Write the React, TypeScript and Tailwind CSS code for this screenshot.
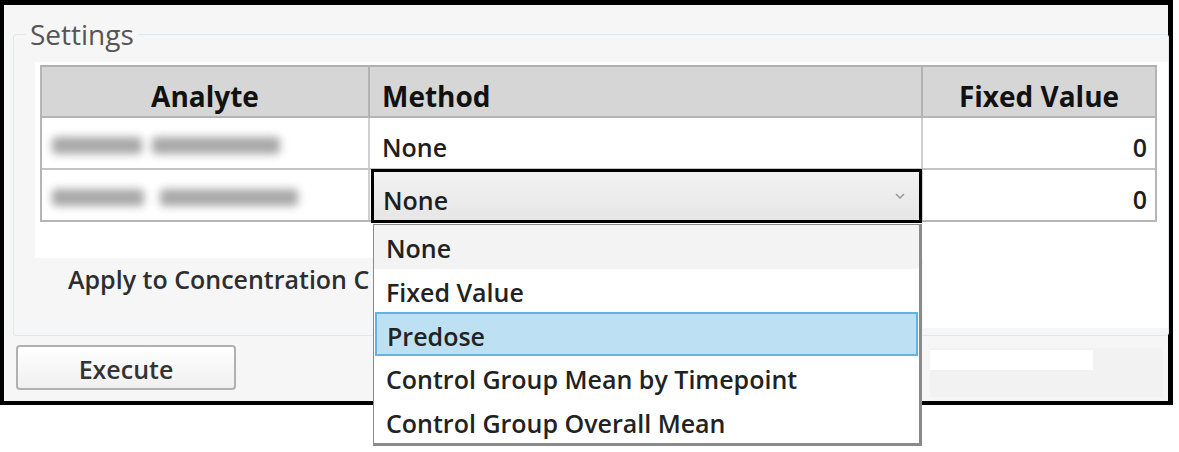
import React from "react";

const font = { fontFamily: '"Open Sans", "Noto Sans", sans-serif' };

function Blur({ a, b, gap }: { a: number; b: number; gap: number }) {
  return (
    <div className="flex items-center blur-[4px] mt-[4px]" style={{ gap }}>
      <div className="h-[17px] bg-[#a8a8a8] rounded" style={{ width: a }} />
      <div className="h-[17px] bg-[#a8a8a8] rounded" style={{ width: b }} />
    </div>
  );
}

export default function App() {
  const items = ["None", "Fixed Value", "Predose", "Control Group Mean by Timepoint", "Control Group Overall Mean"];
  return (
    <div className="relative w-[1179px] h-[452px] bg-white overflow-hidden" style={font}>
      <div className="w-[1173px] h-[405px] border-black border-t-[5px] border-l-[4px] border-r-[5px] border-b-[4px] bg-[#f6f6f6] flex flex-col">
        <fieldset className="ml-[9px] mt-[10px] w-[1153px] h-[321px] border border-[#e1e7ec] rounded-[3px]">
          <legend className="ml-[12px] px-[4px] text-[28px] leading-[38px] text-[#555]">Settings</legend>
          <div className="ml-[21px] mt-[9px] w-[1133px] h-[196px] bg-white pl-[5px] pt-[3px]">
            <div className="w-[1117px] border-2 border-[#b5b5b5] border-t-[#b0b0b0] flex flex-col text-[25px] font-semibold text-[#1e1e1e]">
              <div className="flex h-[51px] bg-[#d6d6d6] border-b-2 border-[#b4b4b4] font-bold text-[28px] text-[#111] leading-none">
                <div className="w-[328px] border-r-2 border-[#b2b2b2] flex items-center justify-center pt-[8px]">Analyte</div>
                <div className="w-[553px] border-r-2 border-[#b2b2b2] flex items-center pl-[12px] pt-[8px]">Method</div>
                <div className="flex-1 flex items-center justify-center pt-[8px]">Fixed Value</div>
              </div>
              <div className="flex h-[52px] border-b-2 border-[#c4c4c4] leading-none">
                <div className="w-[328px] border-r-2 border-[#cfcfcf] flex items-center pl-[10px]"><Blur a={90} b={128} gap={10} /></div>
                <div className="w-[553px] border-r-2 border-[#cfcfcf] flex items-center pl-[12px] pt-[8px]">None</div>
                <div className="flex-1 flex items-center justify-end pr-[8px] pt-[8px]">0</div>
              </div>
              <div className="flex h-[50px] leading-none">
                <div className="w-[328px] border-r-2 border-[#cfcfcf] flex items-center pl-[10px]"><Blur a={92} b={138} gap={16} /></div>
                <div className="w-[553px] border-r-2 border-[#cfcfcf] relative">
                  <div className="absolute left-[1px] right-[-1px] top-[-1px] bottom-[-3px] border-[3px] border-black bg-gradient-to-b from-[#f2f2f2] to-[#e6e6e6] flex items-center pl-[9px] pr-[14px] justify-between">
                    <span className="pt-[8px]">None</span>
                    <svg width="10" height="6" viewBox="0 0 10 6"><path d="M1 1 L5 5 L9 1" fill="none" stroke="#9a9a9a" strokeWidth="1.6" /></svg>
                  </div>
                </div>
                <div className="flex-1 flex items-center justify-end pr-[8px] pt-[8px]">0</div>
              </div>
            </div>
          </div>
          <div className="flex h-[70px]">
            <div className="ml-[54px] whitespace-nowrap pt-[6px] text-[25px] font-semibold text-[#2e2e2e] leading-[30px]">Apply to Concentration C</div>
            <div className="flex-1" />
            <div className="w-[245px] bg-white" />
          </div>
        </fieldset>
        <div className="flex justify-between mt-[9px]">
          <button className="ml-[12px] w-[220px] h-[45px] rounded-[4px] border-2 border-[#b0b0b0] bg-gradient-to-b from-white to-[#f0f0f0] text-[25px] leading-none pt-[4px] font-semibold text-[#333]">Execute</button>
          <div className="mr-[5px] mt-[3px] w-[233px] h-[49px] bg-[#f2f2f2] pt-[2px]">
            <div className="w-[163px] h-[20px] bg-white" />
          </div>
        </div>
      </div>
      <div className="absolute left-[373px] top-[224px] w-[549px] h-[222px] bg-white border border-[#8a8a8a] border-r-[3px] border-b-[3px] flex flex-col text-[25px] leading-none font-semibold text-[#222]">
        {items.map((t, i) => (
          <div
            key={t}
            className={
              i === 2
                ? "h-[44px] flex items-center pl-[10px] pt-[4px] mx-[1px] bg-[#bee0f3] border-2 border-[#62b3e3]"
                : i === 0
                ? "h-[44px] flex items-center pl-[12px] pt-[4px] bg-[#f3f3f3]"
                : "h-[44px] flex items-center pl-[12px] pt-[4px]"
            }
          >
            {t}
          </div>
        ))}
      </div>
    </div>
  );
}
